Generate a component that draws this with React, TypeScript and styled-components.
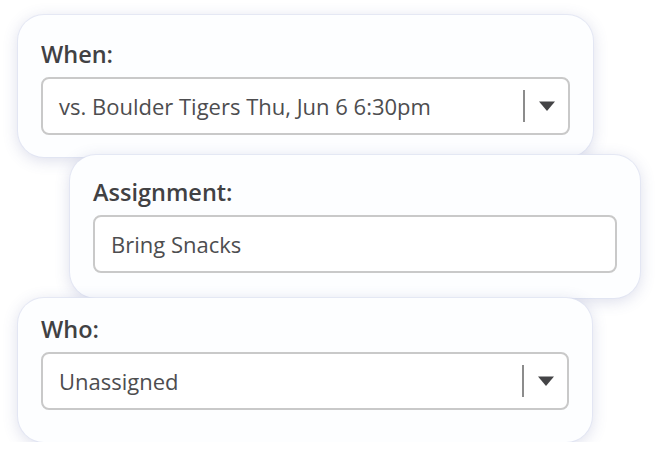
import React from 'react';
import styled, { createGlobalStyle } from 'styled-components';

const GlobalStyle = createGlobalStyle`
  html, body {
    margin: 0;
    padding: 0;
    background: #ffffff;
  }
  body {
    font-family: 'Open Sans', 'Noto Sans', sans-serif;
  }
`;

const Stack = styled('div')`
  display: flex;
  flex-direction: column;
  align-items: flex-start;
  padding: 15px 0 0 18px;
`;

interface CardProps {
  $offset?: number;
  $width: number;
  $top: number;
  $bottom: number;
  $overlap?: number;
}

const Card = styled('div')<CardProps>`
  box-sizing: border-box;
  width: ${({ $width }) => $width}px;
  margin-left: ${({ $offset }) => $offset || 0}px;
  margin-top: ${({ $overlap }) => -($overlap || 0)}px;
  padding: ${({ $top, $bottom }) => `${$top}px 23px ${$bottom}px`};
  background: #fdfeff;
  border-radius: 26px;
  box-shadow: 0 0 0 1px rgba(222, 226, 242, 0.7), 0 3px 16px rgba(70, 80, 150, 0.2);
  display: flex;
  flex-direction: column;
  gap: 8px;
`;

const Label = styled('label')`
  font-size: 23.5px;
  line-height: 30px;
  font-weight: 600;
  color: #414143;
`;

const InputBox = styled('div')`
  box-sizing: border-box;
  height: 58px;
  display: flex;
  align-items: center;
  padding: 0 13px 0 16px;
  border: 2px solid #c9c9c9;
  border-radius: 8px;
  background: #ffffff;
`;

const Value = styled('span')`
  flex: 1;
  font-size: 22px;
  color: #4d4d4f;
  white-space: nowrap;
`;

const Divider = styled('span')`
  width: 2px;
  height: 32px;
  background: #8c8c8c;
  margin-right: 14px;
`;

const Caret = styled('svg')`
  width: 16px;
  height: 10px;
  display: block;
`;

const SelectField = ({ value }: { value: string }) => (
  <InputBox>
    <Value>{value}</Value>
    <Divider />
    <Caret viewBox="0 0 16 10">
      <path d="M0 0.5 H16 L8 10 Z" fill="#444446" />
    </Caret>
  </InputBox>
);

const TextField = ({ value }: { value: string }) => (
  <InputBox>
    <Value>{value}</Value>
  </InputBox>
);

export default function App() {
  return (
    <>
      <GlobalStyle />
      <Stack>
        <Card $width={575} $top={24} $bottom={22}>
          <Label>When:</Label>
          <SelectField value="vs. Boulder Tigers Thu, Jun 6 6:30pm" />
        </Card>
        <Card $width={570} $offset={52} $top={22} $bottom={25} $overlap={2}>
          <Label>Assignment:</Label>
          <TextField value="Bring Snacks" />
        </Card>
        <Card $width={574} $top={16} $bottom={32}>
          <Label>Who:</Label>
          <SelectField value="Unassigned" />
        </Card>
      </Stack>
    </>
  );
}
